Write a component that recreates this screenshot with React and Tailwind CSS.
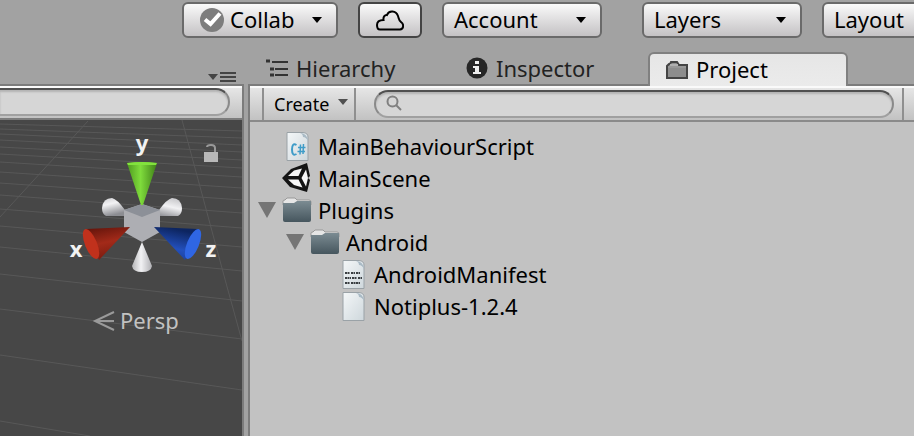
import React from "react";

function CaretDown({ className = "" }) {
  return (
    <svg className={className} width="10" height="6" viewBox="0 0 10 6" aria-hidden="true">
      <path d="M0 0H10L5 6Z" fill="currentColor" />
    </svg>
  );
}

const buttonLook =
  "flex h-9 shrink-0 items-center rounded-md border-2 bg-linear-to-b from-[#fafafa] to-[#c4c2c4] text-[22px] leading-[30px] text-black";

function ToolbarMenu({ label, className = "w-40" }) {
  return (
    <button type="button" className={`${buttonLook} ${className} justify-between border-[#6a6a6a] pl-2.5 pr-3.5`}>
      <span className="pb-0.5">{label}</span>
      <CaretDown />
    </button>
  );
}

function Toolbar() {
  return (
    <header className="flex h-[52px] items-start overflow-hidden pt-0.5 pl-[182px]">
      <button type="button" className={`${buttonLook} mr-5 w-[156px] border-[#6a6a6a] pl-4 pr-3.5`}>
        <svg width="24" height="24" viewBox="0 0 24 24" className="mr-1.5" aria-hidden="true">
          <circle cx="12" cy="12" r="12" fill="#7d7d7d" />
          <path d="M5 11.5L10.500 16L20 5.500" fill="none" stroke="#fff" strokeWidth="4" />
        </svg>
        <span className="pb-0.5">Collab</span>
        <CaretDown className="ml-auto" />
      </button>
      <button type="button" aria-label="Cloud services" className={`${buttonLook} mr-5 w-16 justify-center border-[#444]`}>
        <svg width="28" height="21" viewBox="0 0 28 21" aria-hidden="true">
          <path
            d="M4 19.500H24C28 19 28 14 25 12C23 11 23 9 22 6C20 .5 13 0 11 5C9 4.500 7 7 7.500 10C3 10 1 12 1 15C1 18 2 19.500 4 19.500Z"
            fill="none"
            stroke="#000"
            strokeWidth="2"
          />
        </svg>
      </button>
      <ToolbarMenu label="Account" className="mr-10 w-40" />
      <ToolbarMenu label="Layers" className="mr-5 w-40" />
      <ToolbarMenu label="Layout" />
    </header>
  );
}

function AxisGizmo() {
  return (
    <svg className="absolute top-0 right-0" width="242" height="316" viewBox="0 120 242 316" role="img" aria-label="Scene axes">
      <defs>
        <linearGradient id="green"><stop offset="0" stopColor="#4f9a1f" /><stop offset=".45" stopColor="#7fdc3c" /><stop offset="1" stopColor="#3f8018" /></linearGradient>
        <linearGradient id="white"><stop offset="0" stopColor="#b4b4b6" /><stop offset=".45" stopColor="#f2f2f4" /><stop offset="1" stopColor="#b0b0b4" /></linearGradient>
        <linearGradient id="whiteLeft" x2=".3" y2="1"><stop offset="0" stopColor="#cfcfd2" /><stop offset=".4" stopColor="#f2f2f4" /><stop offset="1" stopColor="#8c8d92" /></linearGradient>
        <linearGradient id="whiteRight" x1=".3" x2="0" y2="1"><stop offset="0" stopColor="#cfcfd2" /><stop offset=".4" stopColor="#f2f2f4" /><stop offset="1" stopColor="#8c8d92" /></linearGradient>
        <linearGradient id="red" x2=".3" y2="1"><stop offset="0" stopColor="#5c120a" /><stop offset=".55" stopColor="#a32a19" /><stop offset="1" stopColor="#7c1c10" /></linearGradient>
        <linearGradient id="blue" x1=".3" x2="0" y2="1"><stop offset="0" stopColor="#0d2560" /><stop offset=".55" stopColor="#2350bd" /><stop offset="1" stopColor="#173a90" /></linearGradient>
      </defs>
      <g fill="none" stroke="#585858" strokeWidth="1">
        <path d="M0 124L242 131M0 129L242 138M0 134L242 145M0 140L242 152M0 147L242 160M0 154L242 168M0 162L242 177M0 172L242 188M0 183L242 200M0 195L242 213M0 209L242 228M0 226L242 247M0 247L242 271M0 274L242 301M0 309L242 339M0 355L242 390M0 421L90 436" />
        <path d="M88 121L0 217M182 120L226 283L242 341" />
      </g>
      <path d="M102 208Q103 198 112 198Q117 199 125 210V216H106Q102 214 102 208Z" fill="url(#whiteLeft)" />
      <path d="M182 208Q181 198 172 198Q167 199 159 210V216H178Q182 214 182 208Z" fill="url(#whiteRight)" />
      <path d="M124 210L142 204L160 210V232L142 242L124 232Z" fill="#adaeb3" />
      <path d="M124 210L142 204L160 210L142 217Z" fill="#8c9098" />
      <path d="M142 242L152 266Q151 272 142 272Q133 272 132 266Z" fill="url(#white)" />
      <path d="M127 163Q142 161 157 163L143 205H141Z" fill="url(#green)" />
      <path d="M127 163Q142 161 157 163L156 165H128Z" fill="#82e23d" />
      <path d="M86 229L130 227L99 260Z" fill="url(#red)" />
      <ellipse cx="91" cy="244" rx="6" ry="16" transform="rotate(-22 91 244)" fill="#c1311c" />
      <path d="M198 229L154 227L185 260Z" fill="url(#blue)" />
      <ellipse cx="193" cy="244" rx="6" ry="16" transform="rotate(22 193 244)" fill="#2f66e4" />
      <path d="M204 152H218V162H204Z" fill="#b9b9b9" />
      <path d="M207 147Q207 145 211 145Q215 145 215 148V152" fill="none" stroke="#999" strokeWidth="2" />
      <path d="M114 312L95 321L114 330M95 321H114" fill="none" stroke="#9a9a9a" strokeWidth="2" />
      <g fill="#f2f2f2" fontSize="22" fontWeight="700" textAnchor="middle">
        <text x="142" y="151">y</text>
        <text x="76" y="257">x</text>
        <text x="211" y="257">z</text>
      </g>
      <text x="120" y="329" fontSize="22" fill="#c2c2c2">Persp</text>
    </svg>
  );
}

function ScenePanel() {
  return (
    <section className="flex w-[244px] shrink-0 flex-col">
      <div className="flex h-8 shrink-0 items-end justify-end gap-1 pr-2 pb-0.5">
        <button type="button" aria-label="Scene panel options" className="flex items-center gap-0.5 text-[#444]">
          <CaretDown />
          <svg width="16" height="10" viewBox="0 0 16 10" aria-hidden="true">
            <path d="M0 1H16M0 5H16M0 9H16" stroke="currentColor" strokeWidth="2" />
          </svg>
        </button>
      </div>
      <div className="flex flex-1 flex-col border-t-2 border-r-2 border-[#7c7c7c]">
        <div className="flex h-8 shrink-0 items-start border-t-2 border-[#fafafa] bg-linear-to-b from-[#e6e6e6] to-[#c2c2c2] pr-3">
          <input
            type="text"
            aria-label="Search scene"
            className="h-7 w-full min-w-0 rounded-r-full border-2 border-l-0 border-t-[#505050] border-r-[#8a8a8a] border-b-[#a0a0a0] bg-[#d6d6d6] px-2 text-lg inset-shadow-[0_2px_2px_#b4b4b4] outline-none"
          />
        </div>
        <div className="relative flex-1 overflow-hidden border-t-2 border-[#7c7c7c] bg-[#474747]">
          <AxisGizmo />
        </div>
      </div>
    </section>
  );
}

function Tab({ label, icon, active = false, className = "" }) {
  return (
    <button
      type="button"
      role="tab"
      aria-selected={active}
      className={`flex shrink-0 items-center text-[22px] leading-[30px] ${
        active
          ? "relative z-10 h-[34px] rounded-t-md border-x-2 border-t-2 border-[#808080] bg-linear-to-b from-[#e6e6e6] to-[#ebebeb] text-black"
          : "h-8 text-[#222]"
      } ${className}`}
    >
      {icon}
      <span className={active ? "pb-0.5" : ""}>{label}</span>
    </button>
  );
}

function HierarchyIcon() {
  return (
    <svg className="mr-2" width="22" height="18" viewBox="0 0 22 18" aria-hidden="true">
      <path d="M0 2H4M4 10H8M4 16H8" stroke="#333" strokeWidth="3" />
      <path d="M6 3H22M9 10H22M9 16H22" stroke="#333" strokeWidth="2" />
    </svg>
  );
}

function InfoIcon() {
  return (
    <svg className="mr-2" width="22" height="22" viewBox="0 0 22 22" aria-hidden="true">
      <circle cx="11" cy="11" r="10.500" fill="#262626" />
      <path d="M9 4H13V7H9ZM7 9H13V15H15V17H7V15H9V11H7Z" fill="#eee" />
    </svg>
  );
}

function ProjectIcon() {
  return (
    <svg className="mr-2" width="22" height="18" viewBox="0 0 22 18" aria-hidden="true">
      <path d="M1 17V5L3 3H4L5 1H11L13 4H21V17Z" fill="#8d8d8d" stroke="#444" strokeWidth="2" />
      <path d="M4 4H12" stroke="#b0b0b0" strokeWidth="2" />
      <path d="M2 6H20" stroke="#a2a2a2" strokeWidth="1" />
    </svg>
  );
}

function PageIcon({ children }) {
  return (
    <svg width="24" height="32" viewBox="0 0 24 32" aria-hidden="true" className="ml-1 mr-2 shrink-0">
      <defs>
        <linearGradient id="page" x2="1" y2="1"><stop offset="0" stopColor="#f4f7f8" /><stop offset="1" stopColor="#ced7dc" /></linearGradient>
      </defs>
      <path d="M1 2.500H17Q22 3 22 7V30.500H1Z" fill="url(#page)" stroke="#9aa2a7" strokeWidth="1" />
      <path d="M14 3Q21 3 22 11Q20 7 17 7Q17 4 14 3Z" fill="#a9bac5" />
      {children}
    </svg>
  );
}

function ScriptIcon() {
  return (
    <PageIcon>
      <path d="M10.500 15Q6 12.500 6 19.500Q6 26.500 10.500 24" fill="none" stroke="#3f9cc8" strokeWidth="2" />
      <path d="M14.500 14.500L14 24.500M17.500 14L17 24M12 17.500H19.500M11.500 21.500H19" stroke="#3f9cc8" strokeWidth="1.500" />
    </PageIcon>
  );
}

function TextAssetIcon() {
  return (
    <PageIcon>
      <path d="M3 15H8M9 15H13M14 15H18M3 20H9M10 20H15M16 20H20M3 25H8M9 25H18" stroke="#3a3f42" strokeWidth="2" strokeDasharray="2 .5" />
    </PageIcon>
  );
}

function UnityIcon() {
  return (
    <svg width="28" height="30" viewBox="0 0 28 30" aria-hidden="true" className="mr-2 shrink-0">
      <path d="M0 15L9 6L25 0L28 13L26 15L28 17L25 29L8 24Z" fill="#141414" />
      <path d="M6 13L12 7.500L20 5.500L16.500 13Z" fill="#f6f6f6" />
      <path d="M6 16.500H16.500L20.500 24.500L12 22Z" fill="#f6f6f6" />
      <path d="M19.500 15L24 6.500L26 15L24 23.500Z" fill="#f6f6f6" />
    </svg>
  );
}

function FolderIcon() {
  return (
    <svg width="30" height="26" viewBox="0 0 30 26" aria-hidden="true" className="mr-1.5 shrink-0">
      <defs>
        <linearGradient id="folder" x2="0" y2="1"><stop offset="0" stopColor="#7b8b92" /><stop offset="1" stopColor="#46565e" /></linearGradient>
      </defs>
      <path d="M1 8V4Q1 3 3 3L5 1H13L15 3H27Q29 3 29 5V8Z" fill="#e6e6e6" stroke="#999" />
      <path d="M1 6H12L15 4H29V23Q29 25 27 25H3Q1 25 1 23Z" fill="url(#folder)" />
    </svg>
  );
}

function Row({ icon, label, expanded = false, indent }) {
  return (
    <li className={`flex h-8 items-center text-[22px] leading-8 ${indent}`}>
      {expanded && (
        <button type="button" aria-label={`Collapse ${label}`} aria-expanded="true" className="mr-1.5">
          <svg width="18" height="16" viewBox="0 0 18 16" aria-hidden="true">
            <path d="M0 0H18L9 16Z" fill="#757575" />
          </svg>
        </button>
      )}
      {icon}
      {label}
    </li>
  );
}

function ProjectPanel() {
  return (
    <section className="ml-1 flex min-w-0 flex-1 flex-col">
      <div role="tablist" className="flex h-8 shrink-0 pl-[18px]">
        <Tab label="Hierarchy" icon={<HierarchyIcon />} className="w-[200px]" />
        <Tab label="Inspector" icon={<InfoIcon />} className="w-[182px]" />
        <Tab label="Project" icon={<ProjectIcon />} active className="w-[200px] pl-4" />
      </div>
      <div className="flex flex-1 flex-col border-t-2 border-l-2 border-[#7c7c7c] bg-[#c2c2c2]">
        <div className="flex h-9 shrink-0 items-stretch border-t-2 border-b-2 border-t-[#fafafa] border-b-[#8a8a8a] bg-linear-to-b from-[#e6e6e6] to-[#c2c2c2] pl-3">
          <button type="button" className="flex w-[94px] shrink-0 items-center justify-between border-x-2 border-[#8f8f8f] pr-1.5 pl-2.5 text-lg">
            Create
            <CaretDown className="mb-1 text-[#505050]" />
          </button>
          <label className="mt-0.5 mr-2 mb-0.5 ml-[18px] flex flex-1 items-center rounded-full border-2 border-t-[#505050] border-r-[#8a8a8a] border-b-[#a0a0a0] border-l-[#8a8a8a] bg-[#d6d6d6] pl-2.5 inset-shadow-[0_2px_2px_#b4b4b4]">
            <svg width="18" height="18" viewBox="0 0 18 18" aria-hidden="true">
              <circle cx="6.500" cy="6.500" r="5" fill="none" stroke="#808080" strokeWidth="2" />
              <path d="M10 10L15 15" stroke="#808080" strokeWidth="2" />
            </svg>
            <input type="text" aria-label="Search project" className="min-w-0 flex-1 bg-transparent px-1 text-lg outline-none" />
          </label>
          <div className="w-3 border-l-2 border-[#8f8f8f]" />
        </div>
        <ul className="pt-2">
          <Row icon={<ScriptIcon />} label="MainBehaviourScript" indent="pl-8" />
          <Row icon={<UnityIcon />} label="MainScene" indent="pl-8" />
          <Row icon={<FolderIcon />} label="Plugins" expanded indent="pl-2" />
          <Row icon={<FolderIcon />} label="Android" expanded indent="pl-9" />
          <Row icon={<TextAssetIcon />} label="AndroidManifest" indent="pl-[88px]" />
          <Row icon={<PageIcon />} label="Notiplus-1.2.4" indent="pl-[88px]" />
        </ul>
      </div>
    </section>
  );
}

export default function App() {
  return (
    <div className="flex min-h-screen w-full flex-col overflow-hidden bg-[#a2a2a2] font-['Noto_Sans','Open_Sans',sans-serif] whitespace-nowrap text-black">
      <Toolbar />
      <main className="flex flex-1">
        <ScenePanel />
        <ProjectPanel />
      </main>
    </div>
  );
}
